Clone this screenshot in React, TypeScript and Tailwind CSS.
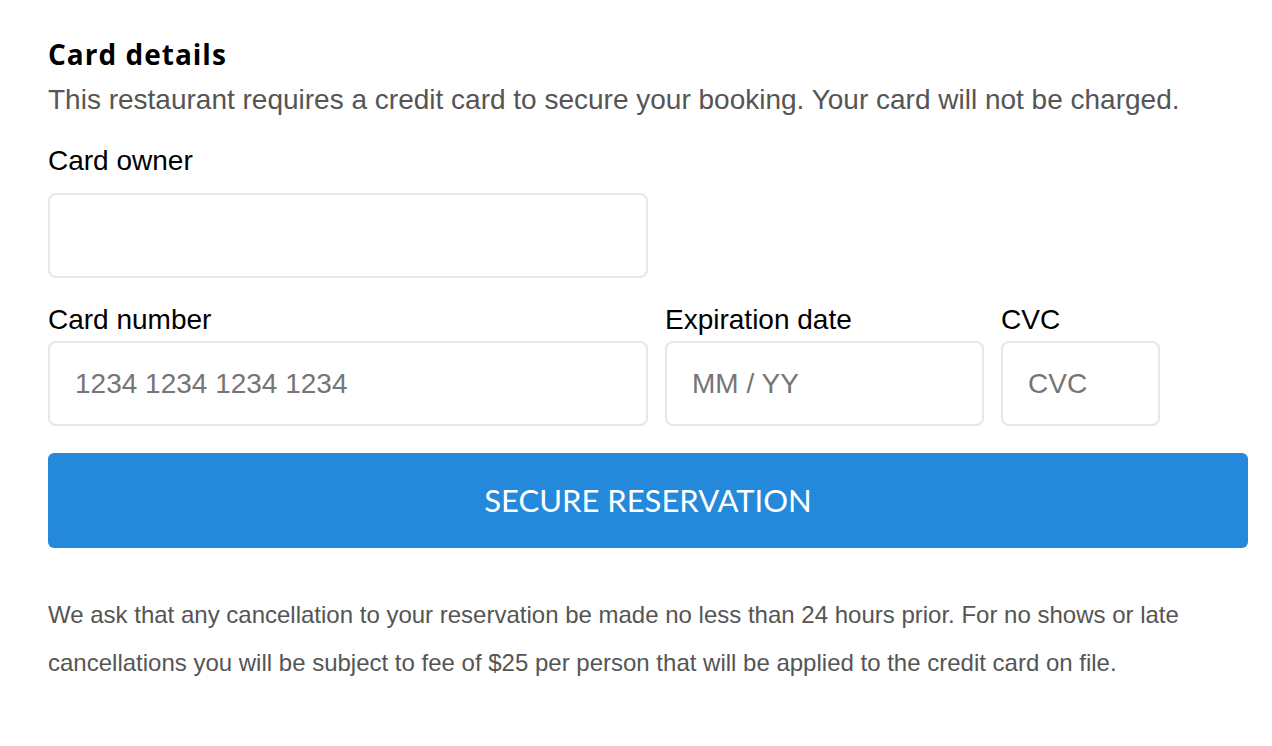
const body = "font-['Liberation_Sans',Arial,sans-serif]"

const Field = ({ label, placeholder, className, gap }: { label?: string; placeholder?: string; className: string; gap: string }) => {
    return (
        <div className={"flex flex-col " + className}>
            {label && <label className={"text-[28px] leading-[34px] text-black " + gap}>{label}</label>}
            <input
                placeholder={placeholder}
                className="h-[85px] w-full rounded-[8px] border-2 border-[#e6e6eb] bg-white px-[25px] text-[28px] text-black outline-none placeholder:text-[#757575]"
            />
        </div>
    )
}

export default function App() {
    return (
        <div className={"min-h-[746px] w-full bg-white " + body}>
            <section className="mx-[48px] pt-[36px] w-[1200px]">
                <h1 className="font-['Open_Sans',sans-serif] text-[28px] font-bold leading-[36px] tracking-[1px] text-black">Card details</h1>
                <p className="mt-[11px] text-[28px] leading-[34px] text-[#555555]">
                    This restaurant requires a credit card to secure your booking. Your card will not be charged.
                </p>

                <div className="mt-[27px] flex">
                    <Field label="Card owner" gap="mb-[15px]" className="w-[600px]" />
                </div>

                <div className="mt-[25px] flex gap-[17px]">
                    <Field label="Card number" gap="mb-[4px]" placeholder="1234 1234 1234 1234" className="w-[600px]" />
                    <Field label="Expiration date" gap="mb-[4px]" placeholder="MM / YY" className="w-[319px]" />
                    <Field label="CVC" gap="mb-[4px]" placeholder="CVC" className="w-[159px]" />
                </div>

                <button className="mt-[27px] flex h-[95px] w-full items-center justify-center rounded-[6px] bg-[#2489db] font-['Lato',sans-serif] text-[31px] text-white">
                    SECURE RESERVATION
                </button>

                <p className="mt-[43px] text-[24px] leading-[48px] text-[#555555]">
                    We ask that any cancellation to your reservation be made no less than 24 hours prior. For no shows or late cancellations you will be subject to fee of $25 per person that will be applied to the credit card on file.
                </p>
            </section>
        </div>
    )
}
